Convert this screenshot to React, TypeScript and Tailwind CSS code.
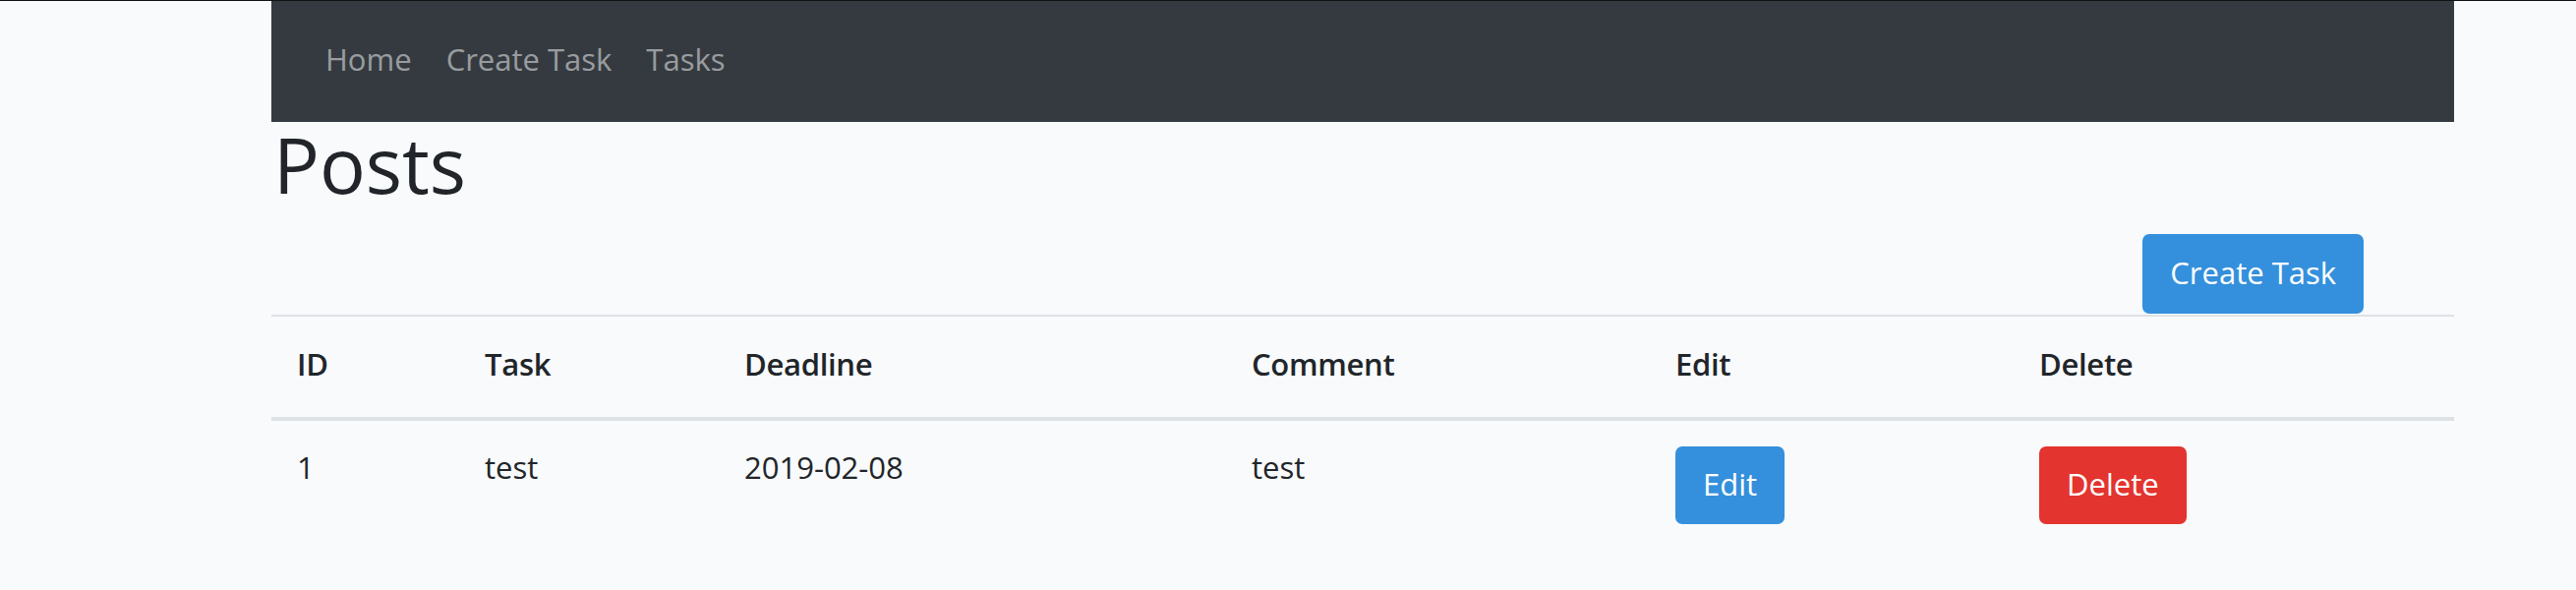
const links = ['Home', 'Create Task', 'Tasks'];

const columns = [
  { label: 'ID', width: 'w-[191px]' },
  { label: 'Task', width: 'w-[264px]' },
  { label: 'Deadline', width: 'w-[516px]' },
  { label: 'Comment', width: 'w-[431px]' },
  { label: 'Edit', width: 'w-[370px]' },
  { label: 'Delete', width: 'w-[448px]' },
];

const tasks = [{ id: 1, task: 'test', deadline: '2019-02-08', comment: 'test' }];

export default function App() {
  return (
    <div className="min-h-[600px] border-t border-[#111] bg-[#f8fafc] font-['Open_Sans',sans-serif] text-[31px] leading-[50px] text-[#212529]">
      <div className="ml-[276px] w-[2220px]">
        <nav className="flex h-[123px] items-center gap-[35px] bg-[#343a40] pb-[5px] pl-[55px]">
          {links.map((l) => (
            <a key={l} href="#" className="text-white/50">
              {l}
            </a>
          ))}
        </nav>

        <h1 className="pl-[2px] text-[78px] leading-[86px] font-normal">Posts</h1>

        <div className="mt-[28px] flex justify-end pr-[92px]">
          <button className="flex h-[81px] items-center rounded-[7px] bg-[#3490dc] px-[28px] pb-[3px] text-white">
            Create Task
          </button>
        </div>

        <table className="mt-px w-full table-fixed border-collapse">
          <thead>
            <tr className="border-t-2 border-[#dee2e6]">
              {columns.map((c) => (
                <th
                  key={c.label}
                  className={`${c.width} border-b-4 border-[#dee2e6] px-[26px] pt-[23px] pb-[29px] text-left font-semibold tracking-[-0.3px]`}
                >
                  {c.label}
                </th>
              ))}
            </tr>
          </thead>
          <tbody>
            {tasks.map((t) => (
              <tr key={t.id}>
                <td className="px-[26px] pt-[22px] align-top">{t.id}</td>
                <td className="px-[26px] pt-[22px] align-top">{t.task}</td>
                <td className="px-[26px] pt-[22px] align-top">{t.deadline}</td>
                <td className="px-[26px] pt-[22px] align-top">{t.comment}</td>
                <td className="px-[26px] pt-[26px] pb-[26px] align-top">
                  <button className="flex h-[79px] items-center rounded-[7px] bg-[#3490dc] px-[28px] pb-[3px] text-white">
                    Edit
                  </button>
                </td>
                <td className="px-[26px] pt-[26px] pb-[26px] align-top">
                  <button className="flex h-[79px] items-center rounded-[7px] bg-[#e3342f] px-[28px] pb-[3px] text-white">
                    Delete
                  </button>
                </td>
              </tr>
            ))}
          </tbody>
        </table>
      </div>
    </div>
  );
}
